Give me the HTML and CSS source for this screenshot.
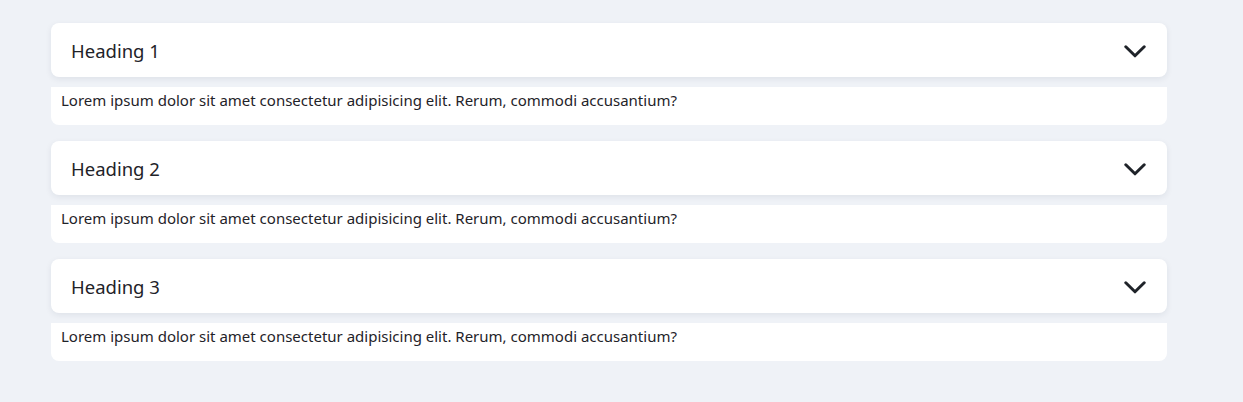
FILE: index.html
```html
<!DOCTYPE html>
<html>
<head>
<meta charset="utf-8">
<link rel="stylesheet" href="styles.css">
</head>
<body>
<div class="accordion">
  <div class="item">
    <div class="head"><span class="title">Heading 1</span>
      <svg class="chev" width="22" height="13" viewBox="0 0 22 13"><path d="M1.8 1.8 L11 10.8 L20.2 1.8" fill="none" stroke="#1f2329" stroke-width="3" stroke-linecap="round" stroke-linejoin="round"/></svg>
    </div>
    <div class="body">Lorem ipsum dolor sit amet consectetur adipisicing elit. Rerum, commodi accusantium?</div>
  </div>
  <div class="item">
    <div class="head"><span class="title">Heading 2</span>
      <svg class="chev" width="22" height="13" viewBox="0 0 22 13"><path d="M1.8 1.8 L11 10.8 L20.2 1.8" fill="none" stroke="#1f2329" stroke-width="3" stroke-linecap="round" stroke-linejoin="round"/></svg>
    </div>
    <div class="body">Lorem ipsum dolor sit amet consectetur adipisicing elit. Rerum, commodi accusantium?</div>
  </div>
  <div class="item">
    <div class="head"><span class="title">Heading 3</span>
      <svg class="chev" width="22" height="13" viewBox="0 0 22 13"><path d="M1.8 1.8 L11 10.8 L20.2 1.8" fill="none" stroke="#1f2329" stroke-width="3" stroke-linecap="round" stroke-linejoin="round"/></svg>
    </div>
    <div class="body">Lorem ipsum dolor sit amet consectetur adipisicing elit. Rerum, commodi accusantium?</div>
  </div>
</div>
</body>
</html>
```

FILE: styles.css
```css
html, body {
  margin: 0;
  padding: 0;
  background: #eff2f7;
  font-family: "Noto Sans", "Open Sans", sans-serif;
  color: #1f2329;
}
.accordion {
  width: 1116px;
  margin: 23px 0 0 51px;
  display: flex;
  flex-direction: column;
  gap: 16px;
}
.item {
  display: flex;
  flex-direction: column;
  gap: 10px;
}
.head {
  background: #fff;
  border-radius: 8px;
  height: 54px;
  padding: 1px 21px 0 20px;
  display: flex;
  align-items: center;
  justify-content: space-between;
  box-shadow: 0 2px 6px rgba(30, 40, 70, 0.08);
  box-sizing: border-box;
}
.title {
  font-size: 18.5px;
}
.chev {
  display: block;
  margin-top: 1px;
}
.body {
  background: #fff;
  border-radius: 0 0 8px 8px;
  padding: 3px 10px 15px;
  font-size: 15px;
  line-height: 20px;
}
```
